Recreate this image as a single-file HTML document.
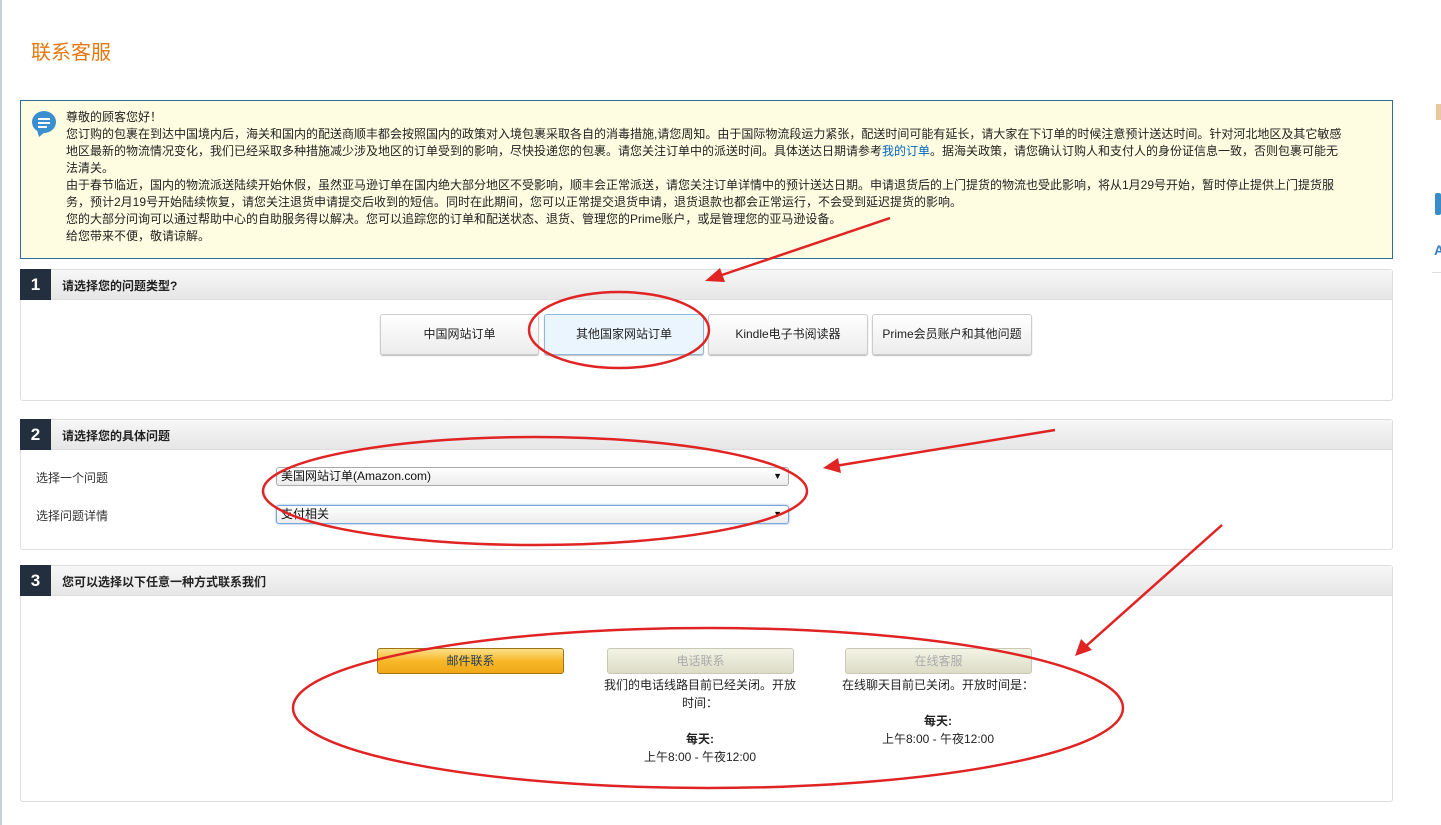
<!DOCTYPE html>
<html><head><meta charset="utf-8"><style>
*{margin:0;padding:0;box-sizing:border-box}
body{width:1441px;height:825px;background:#fff;font-family:"Liberation Sans","Noto Sans CJK SC",sans-serif;font-size:12px;color:#333;position:relative;overflow:hidden}
.abs{position:absolute}
h1{position:absolute;left:31px;top:36px;font-size:20px;font-weight:normal;color:#e47911}
.notice{left:20px;top:100px;width:1373px;height:159px;background:#fefde1;border:1px solid #2f6d99;padding:8px 0 0 45px;line-height:17px;font-size:12px;color:#222}
.notice a{color:#0066c0;text-decoration:none}
.sec{left:20px;width:1373px;border:1px solid #ddd;border-radius:3px}
.hd{height:30px;background:linear-gradient(#f7f7f7,#e6e6e6);border-bottom:1px solid #ddd;position:relative}
.num{position:absolute;left:-1px;top:-1px;width:31px;height:31px;background:#232f3e;color:#fff;font-size:17px;font-weight:bold;text-align:center;line-height:31px}
.ht{position:absolute;left:41px;top:7px;font-weight:bold;font-size:12px;color:#222}
.btn{position:absolute;height:41px;border:1px solid #ccc;border-radius:3px;background:linear-gradient(#fff,#ececec);text-align:center;line-height:39px;font-size:12px;color:#222;box-shadow:0 1px 1px #bbb}
.sel{position:absolute;left:276px;width:513px;height:19px;border:1px solid #aaa;border-radius:3px;background:linear-gradient(#fff,#ececec);font-size:12px;line-height:17px;padding-left:4px;color:#111}
.sel b{position:absolute;right:6px;top:0;font-size:9px}
.b3{position:absolute;top:648px;height:26px;border-radius:3px;text-align:center;line-height:24px;font-size:12px}
.txt{position:absolute;text-align:center;line-height:18px;font-size:12px;color:#222}
</style></head><body>
<div class="abs" style="left:0;top:0;width:2px;height:825px;background:#c8d0d8"></div>
<h1>联系客服</h1>
<div class="abs notice">
<svg class="abs" style="left:10px;top:9px" width="26" height="28"><ellipse cx="13" cy="12" rx="12" ry="11" fill="#3b8fd0"/><path d="M6 20 L8 27 L14 22Z" fill="#3b8fd0"/><rect x="7" y="8" width="12" height="2" fill="#fff"/><rect x="7" y="12" width="12" height="2" fill="#fff"/><rect x="7" y="16" width="9" height="2" fill="#fff"/></svg>
尊敬的顾客您好！<br>
您订购的包裹在到达中国境内后，海关和国内的配送商顺丰都会按照国内的政策对入境包裹采取各自的消毒措施,请您周知。由于国际物流段运力紧张，配送时间可能有延长，请大家在下订单的时候注意预计送达时间。针对河北地区及其它敏感<br>
地区最新的物流情况变化，我们已经采取多种措施减少涉及地区的订单受到的影响，尽快投递您的包裹。请您关注订单中的派送时间。具体送达日期请参考<a>我的订单</a>。据海关政策，请您确认订购人和支付人的身份证信息一致，否则包裹可能无<br>
法清关。<br>
由于春节临近，国内的物流派送陆续开始休假，虽然亚马逊订单在国内绝大部分地区不受影响，顺丰会正常派送，请您关注订单详情中的预计送达日期。申请退货后的上门提货的物流也受此影响，将从1月29号开始，暂时停止提供上门提货服<br>
务，预计2月19号开始陆续恢复，请您关注退货申请提交后收到的短信。同时在此期间，您可以正常提交退货申请，退货退款也都会正常运行，不会受到延迟提货的影响。<br>
您的大部分问询可以通过帮助中心的自助服务得以解决。您可以追踪您的订单和配送状态、退货、管理您的Prime账户，或是管理您的亚马逊设备。<br>
给您带来不便，敬请谅解。
</div>

<div class="abs sec" style="top:269px;height:132px"><div class="hd"><div class="num">1</div><div class="ht">请选择您的问题类型?</div></div></div>
<div class="btn" style="left:380px;top:314px;width:159px">中国网站订单</div>
<div class="btn" style="left:544px;top:314px;width:160px;background:#eaf5fd;border-color:#8fb8d8">其他国家网站订单</div>
<div class="btn" style="left:708px;top:314px;width:160px">Kindle电子书阅读器</div>
<div class="btn" style="left:872px;top:314px;width:160px">Prime会员账户和其他问题</div>

<div class="abs sec" style="top:419px;height:131px"><div class="hd"><div class="num">2</div><div class="ht">请选择您的具体问题</div></div></div>
<div class="abs" style="left:36px;top:469px">选择一个问题</div>
<div class="abs" style="left:36px;top:507px">选择问题详情</div>
<div class="sel" style="top:467px">美国网站订单(Amazon.com)<b>▼</b></div>
<div class="sel" style="top:505px;border-color:#7aa6d8;box-shadow:0 0 2px #7aa6d8">支付相关<b>▼</b></div>

<div class="abs sec" style="top:565px;height:237px"><div class="hd"><div class="num">3</div><div class="ht">您可以选择以下任意一种方式联系我们</div></div></div>
<div class="b3" style="left:377px;width:187px;background:linear-gradient(#fde08a,#f7b828 50%,#f0a818);border:1px solid #9c7416;color:#1f3b5a">邮件联系</div>
<div class="b3" style="left:607px;width:187px;background:linear-gradient(#f4f4e6,#dcdcc6);border:1px solid #c8c8b4;color:#aaa">电话联系</div>
<div class="b3" style="left:845px;width:187px;background:linear-gradient(#f4f4e6,#dcdcc6);border:1px solid #c8c8b4;color:#aaa">在线客服</div>
<div class="txt" style="left:600px;top:676px;width:200px">我们的电话线路目前已经关闭。开放时间：<br><br><b>每天:</b><br>上午8:00 - 午夜12:00</div>
<div class="txt" style="left:838px;top:676px;width:200px">在线聊天目前已关闭。开放时间是：<br><br><b>每天:</b><br>上午8:00 - 午夜12:00</div>

<div class="abs" style="left:1436px;top:104px;width:5px;height:16px;background:#e8c8a0"></div>
<div class="abs" style="left:1435px;top:193px;width:6px;height:22px;background:#3a8cc8;border-radius:2px"></div>
<div class="abs" style="left:1434px;top:242px;color:#3a7cc0;font-weight:bold;font-size:14px">A</div>
<div class="abs" style="left:1432px;top:272px;width:9px;height:1px;background:#ddd"></div>

<svg class="abs" style="left:0;top:0" width="1441" height="825" fill="none" stroke="#e02424" stroke-width="2.5">
<ellipse cx="619" cy="330" rx="90" ry="38"/>
<ellipse cx="535" cy="491" rx="272" ry="54"/>
<ellipse cx="708" cy="708" rx="415" ry="80"/>
<path d="M890 218 L716 277"/>
<path d="M1055 430 L835 466"/>
<path d="M1222 525 L1085 647"/>
<g fill="#e02424" stroke="none">
<path d="M705 281 L720 268 L725 282Z"/>
<path d="M823 468 L838 458 L841 473Z"/>
<path d="M1075 656 L1081 639 L1092 650Z"/>
</g>
</svg>
</body></html>
